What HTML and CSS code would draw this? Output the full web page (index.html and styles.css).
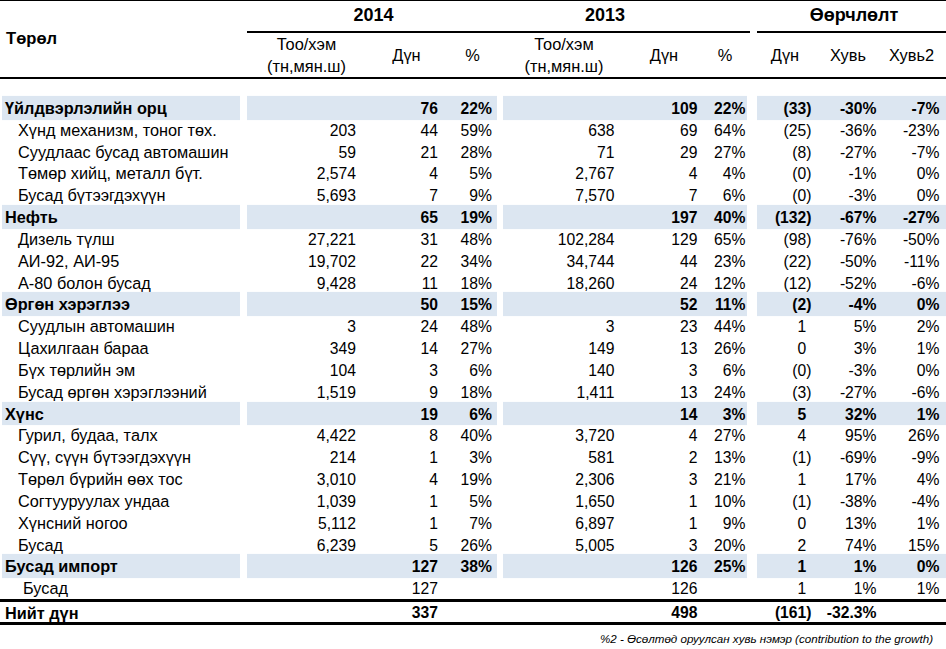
FILE: index.html
```html
<!DOCTYPE html>
<html lang="mn">
<head>
<meta charset="utf-8">
<title>Импорт</title>
<link rel="stylesheet" href="styles.css">
</head>
<body>
<div class="sheet">
  <div class="head">
    <div class="h-lab">Төрөл</div>
    <div class="h-grp h14">
      <div class="year">2014</div>
      <div class="subs">
        <div>Тоо/хэм<br>(тн,мян.ш)</div><div>Дүн</div><div>%</div>
      </div>
    </div>
    <div class="h-grp h13">
      <div class="year y13">2013</div>
      <div class="subs">
        <div>Тоо/хэм<br>(тн,мян.ш)</div><div>Дүн</div><div>%</div>
      </div>
    </div>
    <div class="h-grp hc">
      <div class="year yc">Өөрчлөлт</div>
      <div class="subs">
        <div>Дүн</div><div>Хувь</div><div>Хувь2</div>
      </div>
    </div>
  </div>

  <div class="body">
    <div class="row cat"><div class="lab">Үйлдвэрлэлийн орц</div><div class="seg s14"><span></span><span>76</span><span>22%</span></div><div class="seg s13"><span></span><span>109</span><span>22%</span></div><div class="seg sc"><span>(33)</span><span>-30%</span><span>-7%</span></div></div>
    <div class="row"><div class="lab">Хүнд механизм, тоног төх.</div><div class="seg s14"><span>203</span><span>44</span><span>59%</span></div><div class="seg s13"><span>638</span><span>69</span><span>64%</span></div><div class="seg sc"><span>(25)</span><span>-36%</span><span>-23%</span></div></div>
    <div class="row"><div class="lab">Суудлаас бусад автомашин</div><div class="seg s14"><span>59</span><span>21</span><span>28%</span></div><div class="seg s13"><span>71</span><span>29</span><span>27%</span></div><div class="seg sc"><span>(8)</span><span>-27%</span><span>-7%</span></div></div>
    <div class="row"><div class="lab">Төмөр хийц, металл бүт.</div><div class="seg s14"><span>2,574</span><span>4</span><span>5%</span></div><div class="seg s13"><span>2,767</span><span>4</span><span>4%</span></div><div class="seg sc"><span>(0)</span><span>-1%</span><span>0%</span></div></div>
    <div class="row"><div class="lab">Бусад бүтээгдэхүүн</div><div class="seg s14"><span>5,693</span><span>7</span><span>9%</span></div><div class="seg s13"><span>7,570</span><span>7</span><span>6%</span></div><div class="seg sc"><span>(0)</span><span>-3%</span><span>0%</span></div></div>

    <div class="row cat"><div class="lab">Нефть</div><div class="seg s14"><span></span><span>65</span><span>19%</span></div><div class="seg s13"><span></span><span>197</span><span>40%</span></div><div class="seg sc"><span>(132)</span><span>-67%</span><span>-27%</span></div></div>
    <div class="row"><div class="lab">Дизель түлш</div><div class="seg s14"><span>27,221</span><span>31</span><span>48%</span></div><div class="seg s13"><span>102,284</span><span>129</span><span>65%</span></div><div class="seg sc"><span>(98)</span><span>-76%</span><span>-50%</span></div></div>
    <div class="row"><div class="lab">АИ-92, АИ-95</div><div class="seg s14"><span>19,702</span><span>22</span><span>34%</span></div><div class="seg s13"><span>34,744</span><span>44</span><span>23%</span></div><div class="seg sc"><span>(22)</span><span>-50%</span><span>-11%</span></div></div>
    <div class="row"><div class="lab">А-80 болон бусад</div><div class="seg s14"><span>9,428</span><span>11</span><span>18%</span></div><div class="seg s13"><span>18,260</span><span>24</span><span>12%</span></div><div class="seg sc"><span>(12)</span><span>-52%</span><span>-6%</span></div></div>

    <div class="row cat"><div class="lab">Өргөн хэрэглээ</div><div class="seg s14"><span></span><span>50</span><span>15%</span></div><div class="seg s13"><span></span><span>52</span><span>11%</span></div><div class="seg sc"><span>(2)</span><span>-4%</span><span>0%</span></div></div>
    <div class="row"><div class="lab">Суудлын автомашин</div><div class="seg s14"><span>3</span><span>24</span><span>48%</span></div><div class="seg s13"><span>3</span><span>23</span><span>44%</span></div><div class="seg sc"><span class="pos">1</span><span>5%</span><span>2%</span></div></div>
    <div class="row"><div class="lab">Цахилгаан бараа</div><div class="seg s14"><span>349</span><span>14</span><span>27%</span></div><div class="seg s13"><span>149</span><span>13</span><span>26%</span></div><div class="seg sc"><span class="pos">0</span><span>3%</span><span>1%</span></div></div>
    <div class="row"><div class="lab">Бүх төрлийн эм</div><div class="seg s14"><span>104</span><span>3</span><span>6%</span></div><div class="seg s13"><span>140</span><span>3</span><span>6%</span></div><div class="seg sc"><span>(0)</span><span>-3%</span><span>0%</span></div></div>
    <div class="row"><div class="lab">Бусад өргөн хэрэглээний</div><div class="seg s14"><span>1,519</span><span>9</span><span>18%</span></div><div class="seg s13"><span>1,411</span><span>13</span><span>24%</span></div><div class="seg sc"><span>(3)</span><span>-27%</span><span>-6%</span></div></div>

    <div class="row cat"><div class="lab">Хүнс</div><div class="seg s14"><span></span><span>19</span><span>6%</span></div><div class="seg s13"><span></span><span>14</span><span>3%</span></div><div class="seg sc"><span class="pos">5</span><span>32%</span><span>1%</span></div></div>
    <div class="row"><div class="lab">Гурил, будаа, талх</div><div class="seg s14"><span>4,422</span><span>8</span><span>40%</span></div><div class="seg s13"><span>3,720</span><span>4</span><span>27%</span></div><div class="seg sc"><span class="pos">4</span><span>95%</span><span>26%</span></div></div>
    <div class="row"><div class="lab">Сүү, сүүн бүтээгдэхүүн</div><div class="seg s14"><span>214</span><span>1</span><span>3%</span></div><div class="seg s13"><span>581</span><span>2</span><span>13%</span></div><div class="seg sc"><span>(1)</span><span>-69%</span><span>-9%</span></div></div>
    <div class="row"><div class="lab">Төрөл бүрийн өөх тос</div><div class="seg s14"><span>3,010</span><span>4</span><span>19%</span></div><div class="seg s13"><span>2,306</span><span>3</span><span>21%</span></div><div class="seg sc"><span class="pos">1</span><span>17%</span><span>4%</span></div></div>
    <div class="row"><div class="lab">Согтууруулах ундаа</div><div class="seg s14"><span>1,039</span><span>1</span><span>5%</span></div><div class="seg s13"><span>1,650</span><span>1</span><span>10%</span></div><div class="seg sc"><span>(1)</span><span>-38%</span><span>-4%</span></div></div>
    <div class="row"><div class="lab">Хүнсний ногоо</div><div class="seg s14"><span>5,112</span><span>1</span><span>7%</span></div><div class="seg s13"><span>6,897</span><span>1</span><span>9%</span></div><div class="seg sc"><span class="pos">0</span><span>13%</span><span>1%</span></div></div>
    <div class="row"><div class="lab">Бусад</div><div class="seg s14"><span>6,239</span><span>5</span><span>26%</span></div><div class="seg s13"><span>5,005</span><span>3</span><span>20%</span></div><div class="seg sc"><span class="pos">2</span><span>74%</span><span>15%</span></div></div>

    <div class="row cat"><div class="lab">Бусад импорт</div><div class="seg s14"><span></span><span>127</span><span>38%</span></div><div class="seg s13"><span></span><span>126</span><span>25%</span></div><div class="seg sc"><span class="pos">1</span><span>1%</span><span>0%</span></div></div>
    <div class="row"><div class="lab deep">Бусад</div><div class="seg s14"><span></span><span>127</span><span></span></div><div class="seg s13"><span></span><span>126</span><span></span></div><div class="seg sc"><span class="pos">1</span><span>1%</span><span>1%</span></div></div>
  </div>

  <div class="row total"><div class="lab">Нийт дүн</div><div class="seg s14"><span></span><span>337</span><span></span></div><div class="seg s13"><span></span><span>498</span><span></span></div><div class="seg sc"><span>(161)</span><span>-32.3%</span><span></span></div></div>

  <div class="note">%2 - Өсөлтөд оруулсан хувь нэмэр (contribution to the growth)</div>
</div>
</body>
</html>
```

FILE: styles.css
```css
* { box-sizing: border-box; }
html, body { margin: 0; padding: 0; background: #fff; }
body {
  font-family: "Liberation Sans", Arial, "Noto Sans", sans-serif;
  color: #000;
}
.sheet { width: 946px; }

/* ---------- header ---------- */
.head {
  display: flex;
  height: 79px;
  border-top: 1px solid #000;
  border-bottom: 2px solid #000;
}
.h-lab {
  width: 247px;
  padding: 28px 0 0 6px;
  font-weight: bold;
  font-size: 16.6px;
  line-height: 19px;
}
.h-grp { display: flex; flex-direction: column; }
.h14 { width: 253px; }
.h13 { width: 250px; }
.hc { width: 189px; margin-left: 7px; }
.year {
  height: 32px;
  border-bottom: 2px solid #000;
  text-align: center;
  font-weight: bold;
  font-size: 18px;
  line-height: 29px;
}
.y13 { padding-right: 40px; }
.yc { padding-left: 5px; }
.subs {
  flex: 1;
  display: grid;
  align-items: center;
  text-align: center;
  font-size: 16.4px;
  line-height: 22px;
}
.h14 .subs { grid-template-columns: 119px 81px 51px; }
.h13 .subs { grid-template-columns: 128px 72px 50px; }
.hc .subs { grid-template-columns: 56px 70px 57px; }

/* ---------- body rows ---------- */
.body { padding-top: 18px; }
.row {
  display: flex;
  height: 21.83px;
  font-size: 15.7px;
  line-height: 23px;
}
.lab {
  margin-left: 2px;
  width: 238px;
  padding-left: 16px;
  white-space: nowrap;
  font-size: 16.3px;
}
.lab.deep { padding-left: 21px; }
.seg { display: grid; text-align: right; }
.seg span { white-space: nowrap; }
.s14 { margin-left: 7px; width: 250px; padding-right: 5px; grid-template-columns: 109px 82px 54px; }
.s13 { margin-left: 6px; width: 244px; padding-right: 1.5px; grid-template-columns: 111.5px 83px 48px; }
.sc { margin-left: 10px; width: 189px; padding-right: 6.5px; grid-template-columns: 54.5px 65px 63px; }
.pos { padding-right: 0.333em; }

.cat { font-weight: bold; }
.cat .lab { padding-left: 3px; }
.cat .lab, .cat .seg {
  background: #dce6f1;
  box-shadow: 0 -1.1px 0 #dce6f1, 0 1.1px 0 #dce6f1;
}

/* ---------- total ---------- */
.row.total {
  height: 26px;
  border-top: 3px solid #000;
  border-bottom: 3px solid #000;
  font-weight: bold;
  line-height: 22px;
}
.total .lab { padding-left: 3px; }

/* ---------- note ---------- */
.note {
  padding: 7px 13px 0 0;
  text-align: right;
  font-style: italic;
  font-size: 11.6px;
  line-height: 14px;
}
```
